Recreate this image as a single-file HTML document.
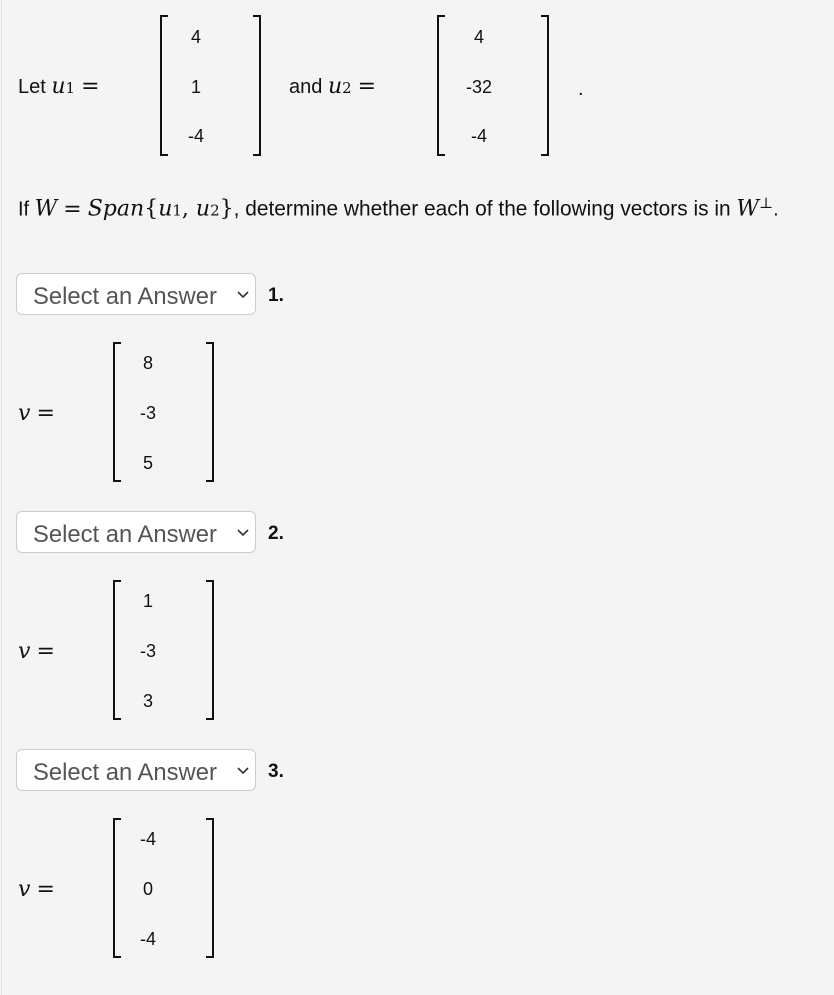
<!DOCTYPE html>
<html><head><meta charset="utf-8"><style>
body{margin:0;width:834px;height:995px;background:#f4f4f4;position:relative;overflow:hidden;font-family:"Liberation Sans",sans-serif;color:#111;font-size:20px}
.b{position:absolute;border-left:1px solid #e0e0e0;left:1px;top:0;height:995px}
.t{position:absolute;white-space:nowrap;line-height:1}
.m{font-family:"DejaVu Serif","Liberation Serif",serif;font-style:italic;font-size:22px}
.r{font-family:"DejaVu Serif","Liberation Serif",serif;font-size:22px}
.s{font-family:"DejaVu Serif","Liberation Serif",serif;font-size:15px}
.eq{margin:0 6px}
.br{position:absolute;border:2px solid #111;width:6px}
.l{border-right:none}.rr{border-left:none}
.v{position:absolute;width:60px;text-align:center;font-size:18px;line-height:1}
.sel{position:absolute;left:16px;width:238px;height:40px;border:1px solid #ccc;border-radius:6px;background:#fff}
.sel span{position:absolute;left:16px;top:9px;font-size:23.8px;color:#555}
.sel svg{position:absolute;left:220px;top:17px}
.n{position:absolute;left:268px;font-weight:bold;font-size:19px}
</style></head><body>
<div class="b"></div>
<div class="t" style="left:18px;top:76px">Let <span class="m">u</span><span class="s">1</span><span class="r eq">=</span></div>
<div class="br l" style="left:160px;top:15px;height:137px"></div>
<div class="br rr" style="left:253px;top:15px;height:137px"></div>
<div class="v" style="left:166px;top:28px">4</div>
<div class="v" style="left:166px;top:78px">1</div>
<div class="v" style="left:166px;top:127px">-4</div>
<div class="t" style="left:289px;top:76px">and <span class="m">u</span><span class="s">2</span><span class="r eq">=</span></div>
<div class="br l" style="left:437px;top:15px;height:137px"></div>
<div class="br rr" style="left:541px;top:15px;height:137px"></div>
<div class="v" style="left:449px;top:28px">4</div>
<div class="v" style="left:449px;top:78px">-32</div>
<div class="v" style="left:449px;top:127px">-4</div>
<div class="t" style="left:578px;top:79px">.</div>
<div class="t" style="left:18px;top:196px">If <span class="m">W</span><span class="r eq">=</span><span class="m">Span</span><span class="r">{</span><span class="m">u</span><span class="s">1</span><span class="r">, </span><span class="m">u</span><span class="s">2</span><span class="r">}</span><span style="font-size:20.9px">, determine whether each of the following vectors is in </span><span class="m">W</span><sup class="r" style="font-size:15px">⊥</sup>.</div>

<div class="sel" style="top:273px"><span>Select an Answer</span><svg width="12" height="8"><path d="M1 1 L6 6 L11 1" stroke="#333" stroke-width="1.6" fill="none"/></svg></div>
<div class="n" style="top:285px">1.</div>
<div class="t m" style="left:18px;top:403px">v<span class="r eq">=</span></div>
<div class="br l" style="left:113px;top:342px;height:136px"></div>
<div class="br rr" style="left:206px;top:342px;height:136px"></div>
<div class="v" style="left:118px;top:354px">8</div>
<div class="v" style="left:118px;top:404px">-3</div>
<div class="v" style="left:118px;top:454px">5</div>

<div class="sel" style="top:511px"><span>Select an Answer</span><svg width="12" height="8"><path d="M1 1 L6 6 L11 1" stroke="#333" stroke-width="1.6" fill="none"/></svg></div>
<div class="n" style="top:523px">2.</div>
<div class="t m" style="left:18px;top:641px">v<span class="r eq">=</span></div>
<div class="br l" style="left:113px;top:580px;height:136px"></div>
<div class="br rr" style="left:206px;top:580px;height:136px"></div>
<div class="v" style="left:118px;top:592px">1</div>
<div class="v" style="left:118px;top:642px">-3</div>
<div class="v" style="left:118px;top:692px">3</div>

<div class="sel" style="top:749px"><span>Select an Answer</span><svg width="12" height="8"><path d="M1 1 L6 6 L11 1" stroke="#333" stroke-width="1.6" fill="none"/></svg></div>
<div class="n" style="top:761px">3.</div>
<div class="t m" style="left:18px;top:879px">v<span class="r eq">=</span></div>
<div class="br l" style="left:113px;top:818px;height:136px"></div>
<div class="br rr" style="left:206px;top:818px;height:136px"></div>
<div class="v" style="left:118px;top:830px">-4</div>
<div class="v" style="left:118px;top:880px">0</div>
<div class="v" style="left:118px;top:930px">-4</div>
</body></html>
